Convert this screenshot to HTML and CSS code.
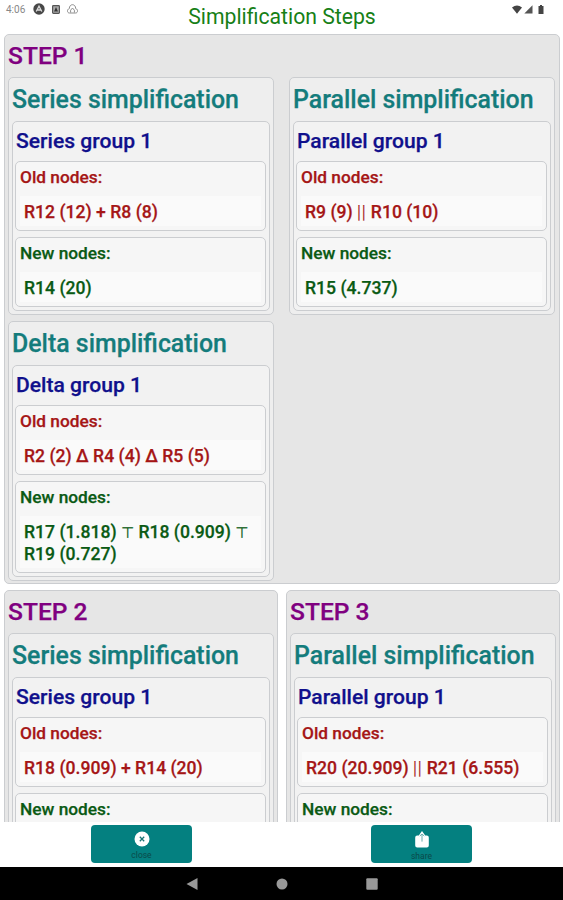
FILE: index.html
```html
<!DOCTYPE html>
<html lang="en">
<head>
  <meta charset="UTF-8">
  <meta name="viewport" content="width=device-width, initial-scale=1">
  <title>Simplification Steps</title>
  <link rel="stylesheet" href="styles.css">
</head>
<body>

  <!-- Status bar and title -->
  <header class="header">
    <div class="status-left">
      <span class="clock">4:06</span>
      <svg class="icon-app" width="12" height="12" viewBox="0 0 12 12"><circle cx="6" cy="6" r="5.7" fill="#484848"/><path d="M3.2 8.5 6 3.2l2.8 5.3M4.5 7h3" fill="none" stroke="#ddd" stroke-width="1.3"/></svg>
      <svg class="icon-card" width="8" height="9" viewBox="0 0 8 9"><rect x=".6" y=".6" width="6.8" height="7.8" rx=".8" fill="#aaa" stroke="#555" stroke-width="1.2"/><path d="M2 6.5 4 2l2 4.5z" fill="#333"/></svg>
      <svg class="icon-cloud" width="11" height="10" viewBox="0 0 11 10"><path d="M2.3 4.6C2.3-.6 8.7-.6 8.7 4.6 11.3 5.4 11 9 8.6 9H2.4C0 9-.3 5.4 2.3 4.6z" fill="none" stroke="#8c8c8c" stroke-width="1"/><path d="M3.6 8.5V6.2L5.5 4l1.9 2.2v2.3" fill="none" stroke="#8c8c8c"/></svg>
    </div>
    <h1 class="title">Simplification Steps</h1>
    <div class="status-right">
      <svg width="10" height="9" viewBox="0 0 10 9"><path d="M0 2.4Q5-1.6 10 2.4L5 8.8z" fill="#444"/></svg>
      <svg width="9" height="9" viewBox="0 0 9 9"><path d="M8.5.3v8.2H.3z" fill="#555"/></svg>
      <svg class="icon-battery" width="6" height="9" viewBox="0 0 6 9"><path d="M2 0h2v1h1.5v8h-5V1H2z" fill="#444"/></svg>
    </div>
  </header>

  <main class="steps">
    <section class="step step-wide">
      <h2 class="step-title">STEP 1</h2>
      <div class="step-grid">
        <div class="simplification">
          <h3 class="simplification-title">Series simplification</h3>
          <div class="group">
            <h4 class="group-title">Series group 1</h4>
            <div class="nodes old">
              <div class="nodes-label">Old nodes:</div>
              <div class="nodes-value">R12 (12) + R8 (8)</div>
            </div>
            <div class="nodes new">
              <div class="nodes-label">New nodes:</div>
              <div class="nodes-value">R14 (20)</div>
            </div>
          </div>
        </div>
        <div class="simplification">
          <h3 class="simplification-title">Parallel simplification</h3>
          <div class="group">
            <h4 class="group-title">Parallel group 1</h4>
            <div class="nodes old">
              <div class="nodes-label">Old nodes:</div>
              <div class="nodes-value">R9 (9) <span class="op">||</span> R10 (10)</div>
            </div>
            <div class="nodes new">
              <div class="nodes-label">New nodes:</div>
              <div class="nodes-value">R15 (4.737)</div>
            </div>
          </div>
        </div>
        <div class="simplification">
          <h3 class="simplification-title">Delta simplification</h3>
          <div class="group">
            <h4 class="group-title">Delta group 1</h4>
            <div class="nodes old">
              <div class="nodes-label">Old nodes:</div>
              <div class="nodes-value">R2 (2) Δ R4 (4) Δ R5 (5)</div>
            </div>
            <div class="nodes new">
              <div class="nodes-label">New nodes:</div>
              <div class="nodes-value">R17 (1.818) <span class="tee">⊤</span> R18 (0.909) <span class="tee">⊤</span><br>R19 (0.727)</div>
            </div>
          </div>
        </div>
      </div>
    </section>

    <section class="step">
      <h2 class="step-title">STEP 2</h2>
      <div class="simplification">
        <h3 class="simplification-title">Series simplification</h3>
        <div class="group">
          <h4 class="group-title">Series group 1</h4>
          <div class="nodes old">
            <div class="nodes-label">Old nodes:</div>
            <div class="nodes-value">R18 (0.909) + R14 (20)</div>
          </div>
          <div class="nodes new">
            <div class="nodes-label">New nodes:</div>
          </div>
        </div>
      </div>
    </section>

    <section class="step">
      <h2 class="step-title">STEP 3</h2>
      <div class="simplification">
        <h3 class="simplification-title">Parallel simplification</h3>
        <div class="group">
          <h4 class="group-title">Parallel group 1</h4>
          <div class="nodes old">
            <div class="nodes-label">Old nodes:</div>
            <div class="nodes-value">R20 (20.909) <span class="op">||</span> R21 (6.555)</div>
          </div>
          <div class="nodes new">
            <div class="nodes-label">New nodes:</div>
          </div>
        </div>
      </div>
    </section>
  </main>

  <!-- Action buttons -->
  <footer class="actions">
    <button class="action">
      <svg width="16" height="16" viewBox="0 0 16 16"><circle cx="8" cy="8" r="7.5" fill="#fff"/><path d="M5.8 5.8l4.4 4.4M10.2 5.8l-4.4 4.4" stroke="#1a7474" stroke-width="1.3"/></svg>
      <span>close</span>
    </button>
    <button class="action">
      <svg width="16" height="17" viewBox="0 0 16 17"><path d="M3.2 4.4h1.6L8 0l3.2 4.4h1.6q2 0 2 2v8q0 2-2 2H3.2q-2 0-2-2v-8q0-2 2-2z" fill="#fff"/><path d="M8 3.6v7M5.8 5 8 3l2.2 2" fill="none" stroke="#6aaeae" stroke-width="1"/></svg>
      <span>share</span>
    </button>
  </footer>

  <!-- Android navigation bar -->
  <nav class="navbar">
    <svg width="12" height="14" viewBox="0 0 12 14"><path d="M11.5 1v12L.5 7z" fill="#999"/></svg>
    <svg width="12" height="12" viewBox="0 0 12 12"><circle cx="6" cy="6" r="5.5" fill="#999"/></svg>
    <svg width="12" height="12" viewBox="0 0 12 12"><rect x=".3" y=".3" width="11.4" height="11.4" rx="1" fill="#999"/></svg>
  </nav>

</body>
</html>
```

FILE: styles.css
```css
* {
  margin: 0;
  padding: 0;
  box-sizing: border-box;
}

body {
  display: flex;
  flex-direction: column;
  width: 563px;
  height: 900px;
  overflow: hidden;
  background: #fff;
  font-family: Roboto, sans-serif;
  font-weight: 500;
}

/* Header */
.header {
  display: grid;
  grid-template-columns: 1fr auto 1fr;
  flex: none;
  height: 34px;
}

.title {
  padding-left: 1px;
  font-size: 21.2px;
  font-weight: 400;
  line-height: 34px;
  color: #168016;
}

.status-left,
.status-right {
  display: flex;
  align-items: center;
  height: 18px;
}

.status-left {
  padding-left: 6px;
}

.clock {
  width: 27px;
  font-size: 10px;
  font-weight: 400;
  color: #888;
}

.icon-card {
  margin-left: 7px;
}

.icon-cloud {
  margin-left: 7px;
}

.status-right {
  justify-content: flex-end;
  gap: 2px;
  padding-right: 19px;
}

.icon-battery {
  margin-left: 3px;
}

/* Steps */
.steps {
  display: grid;
  grid-template-columns: 1fr 1fr;
  align-content: start;
  gap: 6px 8px;
  flex: 1;
  min-height: 0;
  padding: 0 3px 0 4px;
  overflow: hidden;
  -webkit-text-stroke: 0.25px currentColor;
}

.step,
.simplification,
.group,
.nodes {
  border: 1px solid #cbcdd0;
  border-radius: 5px;
}

.step {
  padding: 0 3px 2px;
  background: #e6e6e6;
}

.step-wide {
  grid-column: 1 / 3;
  padding-right: 4px;
}

.step-title {
  height: 42px;
  font-size: 24.6px;
  font-weight: 500;
  line-height: 41px;
  color: #800080;
}

.step-grid {
  display: grid;
  grid-template-columns: 1fr 1fr;
  gap: 6px 15px;
}

.simplification {
  padding: 0 3px 3px;
  background: #eee;
}

.simplification-title {
  height: 43px;
  font-size: 24.9px;
  font-weight: 500;
  line-height: 43px;
  color: #147c7c;
}

.group {
  padding: 0 3px 3px 2px;
  background: #f2f2f2;
}

.group-title {
  height: 39px;
  padding-left: 1px;
  font-size: 21.1px;
  font-weight: 500;
  line-height: 37px;
  color: #10108c;
}

.nodes {
  padding: 0 4px 4px;
  background: #f6f6f6;
}

.nodes + .nodes {
  margin-top: 6px;
}

.nodes-label {
  height: 34px;
  font-size: 17.3px;
  line-height: 31px;
}

.nodes-value {
  padding: 5px 4px 3px;
  background: #fafafa;
  font-size: 17.6px;
  line-height: 22px;
}

.old {
  color: #a51616;
}

.new {
  color: #0a5a14;
}

.op {
  font-weight: 300;
  letter-spacing: 0.8px;
}

.tee {
  font-family: "DejaVu Sans", sans-serif;
  font-size: 15px;
  font-weight: 400;
  line-height: 1;
}

/* Buttons */
.actions {
  display: flex;
  justify-content: center;
  gap: 179px;
  flex: none;
  height: 45px;
  padding-top: 3px;
}

.action {
  display: flex;
  flex-direction: column;
  align-items: center;
  width: 101px;
  height: 38px;
  padding-top: 6px;
  border: none;
  border-radius: 4px;
  background: #048080;
  color: #0a4a4a;
  font-family: Roboto, sans-serif;
  font-size: 8.5px;
  line-height: 16px;
}

.action svg {
  flex: none;
}

/* Navigation bar */
.navbar {
  display: flex;
  align-items: center;
  justify-content: center;
  gap: 78px;
  flex: none;
  height: 33px;
  background: #000;
}
```
